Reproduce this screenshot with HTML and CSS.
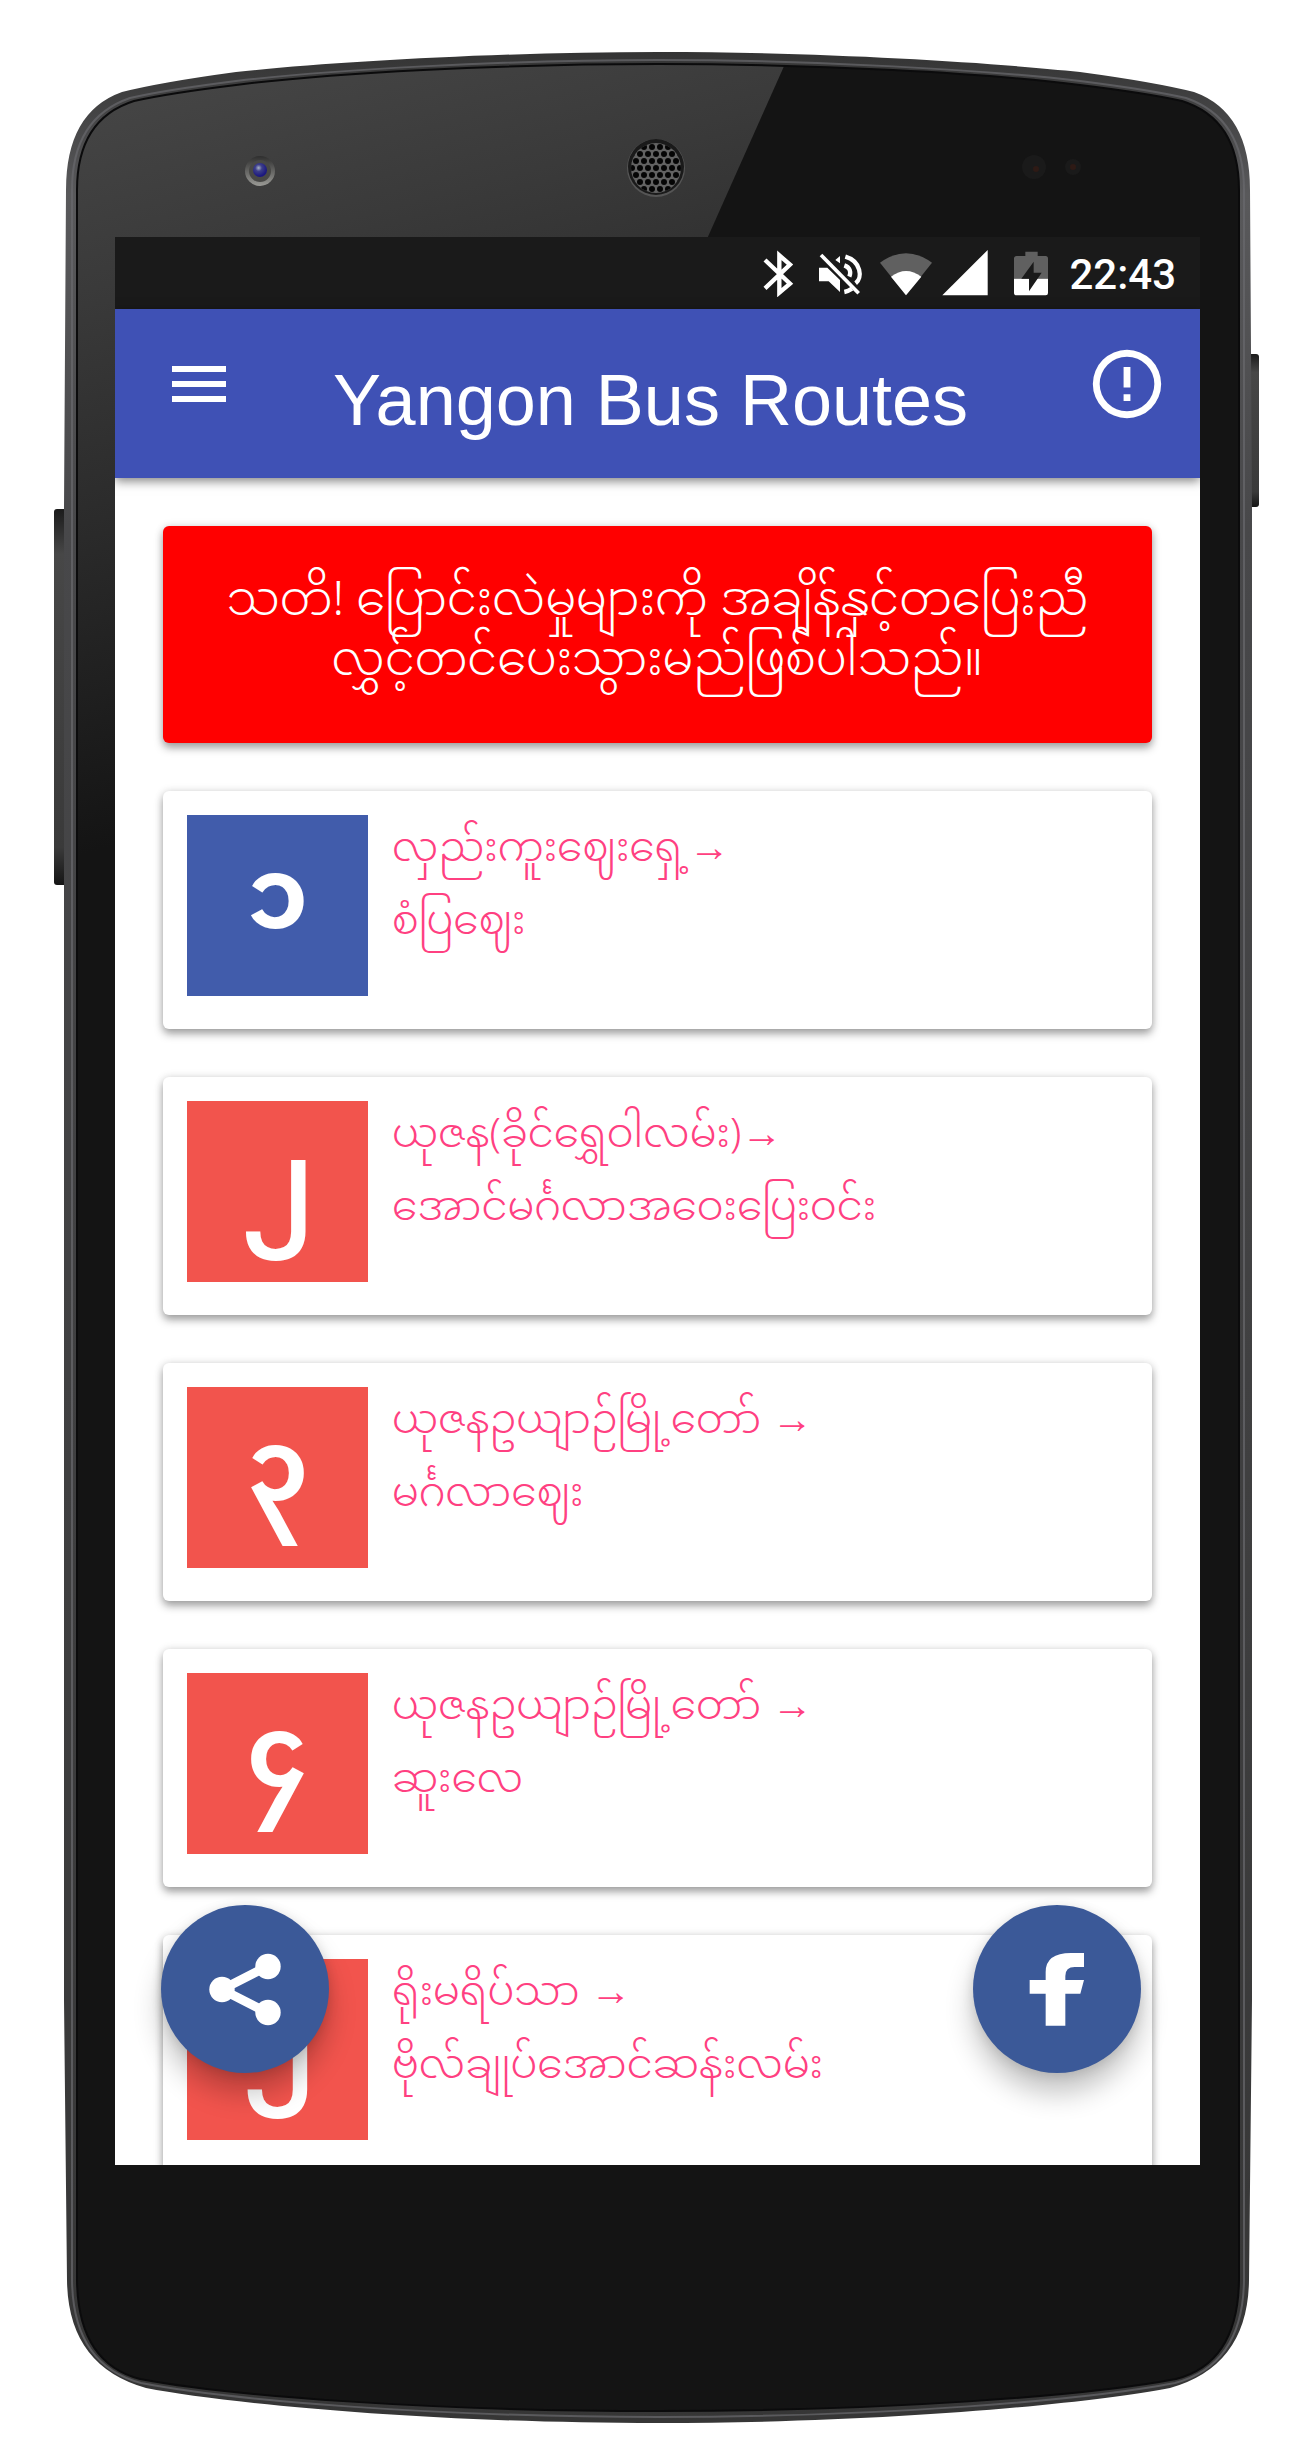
FILE: index.html
```html
<!DOCTYPE html>
<html lang="my">
<head>
<meta charset="utf-8">
<meta name="viewport" content="width=device-width, initial-scale=1">
<title>Yangon Bus Routes</title>
<link rel="stylesheet" href="styles.css">
</head>
<body>
<div class="device">
  <svg class="device-frame" viewBox="0 0 1293 2456" preserveAspectRatio="none" aria-hidden="true">
    <defs>
      <linearGradient id="rim" x1="0" y1="0" x2="0" y2="1">
        <stop offset="0" stop-color="#343434"/>
        <stop offset="0.06" stop-color="#59595b"/>
        <stop offset="0.2" stop-color="#48484a"/>
        <stop offset="1" stop-color="#363636"/>
      </linearGradient>
      <linearGradient id="shine" gradientUnits="userSpaceOnUse" x1="240" y1="60" x2="430" y2="760">
        <stop offset="0" stop-color="#454545"/>
        <stop offset="0.25" stop-color="#3a3a3a"/>
        <stop offset="0.6" stop-color="#292929"/>
        <stop offset="1" stop-color="#141414"/>
      </linearGradient>
      <linearGradient id="key" x1="0" y1="0" x2="0" y2="1">
        <stop offset="0" stop-color="#1b1b1b"/>
        <stop offset="0.12" stop-color="#474747"/>
        <stop offset="0.9" stop-color="#3a3a3a"/>
        <stop offset="1" stop-color="#151515"/>
      </linearGradient>
      <radialGradient id="lens" cx="0.4" cy="0.35" r="0.6">
        <stop offset="0" stop-color="#a9b3c4"/>
        <stop offset="0.4" stop-color="#3d3f8a"/>
        <stop offset="1" stop-color="#1b1780"/>
      </radialGradient>
      <linearGradient id="ring" x1="0" y1="0" x2="0" y2="1">
        <stop offset="0" stop-color="#2e2e2e"/>
        <stop offset="1" stop-color="#9a9a96"/>
      </linearGradient>
      <pattern id="holes" patternUnits="userSpaceOnUse" x="652" y="161" width="8" height="14">
        <circle cx="4" cy="7" r="3" fill="#050505"/>
        <circle cx="0" cy="0" r="3" fill="#050505"/>
        <circle cx="8" cy="0" r="3" fill="#050505"/>
        <circle cx="0" cy="14" r="3" fill="#050505"/>
        <circle cx="8" cy="14" r="3" fill="#050505"/>
      </pattern>
      <clipPath id="glass">
        <path d="M658 64C500 64 330 73 236 85Q170 93 134 101Q77 119 77 190V2280Q78 2363 140 2379C230 2396 430 2411 658 2411S1086 2396 1176 2379Q1238 2363 1239 2280V190Q1239 119 1182 101Q1146 93 1080 85C986 73 816 64 658 64Z"/>
      </clipPath>
    </defs>
    <rect x="54" y="509" width="16" height="376" rx="3" fill="url(#key)"/>
    <rect x="1244" y="354" width="15" height="153" rx="3" fill="url(#key)"/>
    <path fill="url(#rim)" d="M658 52C500 52 330 62 236 72Q162 82 122 92Q66 112 66 190L64 509V2000L67 2280Q68 2366 146 2388C230 2404 430 2423 658 2423S1086 2404 1170 2388Q1248 2366 1249 2280L1252 2000V509L1250 190Q1250 112 1194 92Q1154 82 1080 72C986 62 816 52 658 52Z"/>
    <path fill="none" stroke="#6a6a6e" stroke-width="2" opacity="0.7" d="M658 60C500 60 330 70 236 81Q165 90 130 98Q72 118 72 190V2280Q73 2365 141 2383C230 2400 430 2417 658 2417S1086 2400 1175 2383Q1243 2365 1244 2280V190Q1244 118 1186 98Q1151 90 1080 81C986 70 816 60 658 60Z"/>
    <g clip-path="url(#glass)">
      <rect x="70" y="55" width="1180" height="2365" fill="#141414"/>
      <path d="M70 55H789L430 860H70Z" fill="url(#shine)"/>
    </g>
    <path fill="none" stroke="#0b0b0c" stroke-width="2" d="M658 64C500 64 330 73 236 85Q170 93 134 101Q77 119 77 190V2280Q78 2363 140 2379C230 2396 430 2411 658 2411S1086 2396 1176 2379Q1238 2363 1239 2280V190Q1239 119 1182 101Q1146 93 1080 85C986 73 816 64 658 64Z"/>
    <circle cx="260" cy="171" r="15" fill="url(#ring)"/>
    <circle cx="260" cy="171" r="11" fill="#484846"/>
    <circle cx="260" cy="170" r="7" fill="url(#lens)"/>
    <circle cx="656" cy="168" r="29" fill="#555"/>
    <circle cx="656" cy="167" r="28" fill="#1a1a1a"/>
    <circle cx="656" cy="168" r="25" fill="#626262"/>
    <circle cx="656" cy="168" r="25" fill="url(#holes)"/>
    <circle cx="1034" cy="167" r="12" fill="#1a1a1a"/>
    <circle cx="1036" cy="169" r="3" fill="#2e1a15"/>
    <circle cx="1073" cy="167" r="8" fill="#1a1a1a"/>
    <circle cx="1073" cy="167" r="3" fill="#2e1a15"/>
  </svg>

  <div class="screen">
    <div class="status-bar">
      <svg width="46" height="48" viewBox="69 39 138 144" aria-hidden="true"><path d="M75 72L150 143L118 170V58L150 86L75 157" fill="none" stroke="#fff" stroke-width="13"/></svg>
      <svg width="52" height="48" viewBox="234 39 156 144" aria-hidden="true">
        <path d="M237 95H262L300 132V168L266 136H237ZM300 60V82L286 72Z" fill="#fff"/>
        <path d="M316 62C364 76 368 126 347 142M313 88C330 94 334 108 328 122M313 168Q324 166 336 158" fill="none" stroke="#fff" stroke-width="13"/>
        <path d="M243 57L356 172" stroke="#fff" stroke-width="11"/>
      </svg>
      <svg width="54" height="48" viewBox="417 39 162 144" aria-hidden="true">
        <path d="M498 178L420 80Q498 24 576 80Z" fill="#606060"/>
        <path d="M498 178L453 122Q498 88 544 122Z" fill="#fff"/>
      </svg>
      <svg width="62" height="48" viewBox="606 39 186 144" aria-hidden="true"><path d="M743 42V178H607Z" fill="#fff"/></svg>
      <svg width="47" height="48" viewBox="819 39 141 144" aria-hidden="true">
        <path d="M856 47H893V60H917Q924 60 924 68V128H822V68Q822 60 830 60H856Z" fill="#606060"/>
        <path d="M822 128H924V171Q924 178 917 178H830Q822 178 822 171Z" fill="#fff"/>
        <path d="M881 77L844 128H867V166L905 110H881Z" fill="#1a1a1a"/>
      </svg>
      <time class="clock">22:43</time>
    </div>

    <header class="app-bar">
      <button class="bar-button" type="button" aria-label="Menu">
        <svg width="72" height="72" viewBox="0 0 24 24" aria-hidden="true"><path d="M3 18h18v-2H3zm0-5h18v-2H3zm0-7v2h18V6z" fill="#fff"/></svg>
      </button>
      <h1 class="app-title">Yangon Bus Routes</h1>
      <button class="bar-button" type="button" aria-label="About">
        <svg width="82" height="82" viewBox="0 0 24 24" aria-hidden="true"><path d="M11 15h2v2h-2zm0-8h2v6h-2zm1-5a10 10 0 1 0 0 20a10 10 0 1 0 0-20zm0 18a8 8 0 1 1 0-16 8 8 0 0 1 0 16z" fill="#fff"/></svg>
      </button>
    </header>

    <main class="content">
      <p class="notice">သတိ! ပြောင်းလဲမှုများကို အချိန်နှင့်တပြေးညီ<br>လွှင့်တင်ပေးသွားမည်ဖြစ်ပါသည်။</p>
      <a class="route" href="#route-1"><span class="route-number blue">၁</span><span class="route-name">လှည်းကူးဈေးရှေ့→<br>စံပြဈေး</span></a>
      <a class="route" href="#route-2"><span class="route-number">၂</span><span class="route-name">ယုဇန(ခိုင်ရွှေဝါလမ်း)→<br>အောင်မင်္ဂလာအဝေးပြေးဝင်း</span></a>
      <a class="route" href="#route-3"><span class="route-number">၃</span><span class="route-name">ယုဇနဥယျာဉ်မြို့တော် →<br>မင်္ဂလာဈေး</span></a>
      <a class="route" href="#route-4"><span class="route-number">၄</span><span class="route-name">ယုဇနဥယျာဉ်မြို့တော် →<br>ဆူးလေ</span></a>
      <a class="route" href="#route-5"><span class="route-number">၅</span><span class="route-name">ရိုးမရိပ်သာ →<br>ဗိုလ်ချုပ်အောင်ဆန်းလမ်း</span></a>
    </main>

    <button class="fab fab-share" type="button" aria-label="Share">
      <svg width="168" height="168" viewBox="0 0 168 168" aria-hidden="true">
        <path d="M107 61L61 84.500L107 108" fill="none" stroke="#fff" stroke-width="9"/>
        <circle cx="61" cy="84.500" r="12.700" fill="#fff"/><circle cx="107" cy="61.500" r="12.700" fill="#fff"/><circle cx="107" cy="107.500" r="12.700" fill="#fff"/>
      </svg>
    </button>
    <button class="fab fab-facebook" type="button" aria-label="Facebook">
      <svg width="168" height="168" viewBox="218 74 504 504" aria-hidden="true"><path d="M436 436H495V340H540L551 299H495V287Q495 260 523 260H551V218H512Q436 218 436 275V299H388V340H436Z" fill="#fff"/></svg>
    </button>
  </div>
</div>
</body>
</html>
```
FILE: styles.css
```css
* {
  box-sizing: border-box;
}

body {
  margin: 0;
  background: #fff;
  font-family: "Noto Sans Myanmar", "Padauk", "Noto Sans", sans-serif;
}

.device {
  position: relative;
  padding: 237px 93px 291px 115px;
}

.device-frame {
  position: absolute;
  inset: 0;
  width: 100%;
  height: 100%;
}

.screen {
  position: relative;
  aspect-ratio: 1085 / 1928;
  overflow: hidden;
  background: #fff;
}

.status-bar {
  display: flex;
  align-items: center;
  justify-content: flex-end;
  gap: 9px;
  height: 72px;
  padding-right: 24px;
  background: #1a1a1a;
}

.clock {
  padding-top: 3px;
  color: #fff;
  font: 500 42px/72px Roboto, sans-serif;
}

.app-bar {
  position: relative;
  display: flex;
  align-items: flex-start;
  justify-content: space-between;
  height: 169px;
  padding: 33px 32px 0 48px;
  background: #3f51b5;
  box-shadow: 0 3px 10px rgba(0, 0, 0, 0.5);
}

.bar-button {
  display: flex;
  align-items: center;
  height: 84px;
  padding: 0;
  border: 0;
  background: none;
}

.app-title {
  margin: 0 20px 0 0;
  color: #fff;
  font: 400 72px/116px "Liberation Sans", Arial, sans-serif;
}

.content {
  display: flex;
  flex-direction: column;
  gap: 48px;
  padding: 48px;
}

.notice,
.route {
  border-radius: 6px;
  box-shadow: 0 5px 8px rgba(0, 0, 0, 0.34), 0 0 8px rgba(0, 0, 0, 0.12);
}

.notice {
  margin: 0;
  padding: 48px 0 49px;
  background: #f00;
  color: #fff;
  font-size: 47px;
  font-weight: 300;
  line-height: 60px;
  text-align: center;
  white-space: nowrap;
}

.route {
  display: flex;
  align-items: flex-start;
  gap: 24px;
  padding: 24px 24px 33px;
  background: #fff;
  color: #ff4081;
  font-size: 41px;
  font-weight: 300;
  line-height: 73px;
  text-decoration: none;
  white-space: nowrap;
}

.route-number {
  width: 181px;
  height: 181px;
  flex: none;
  background: #f2544d;
  color: #fff;
  font-size: 98px;
  font-weight: 700;
  line-height: 181px;
  text-align: center;
}

.route-number.blue {
  background: #415cab;
}

.fab {
  position: absolute;
  bottom: 92px;
  width: 168px;
  height: 168px;
  padding: 0;
  border: 0;
  border-radius: 50%;
  background: #3b5998;
  box-shadow: 0 20px 28px rgba(0, 0, 0, 0.24), 0 2px 12px rgba(0, 0, 0, 0.12);
}

.fab svg {
  display: block;
}

.fab-share {
  left: 46px;
}

.fab-facebook {
  right: 59px;
}
```
